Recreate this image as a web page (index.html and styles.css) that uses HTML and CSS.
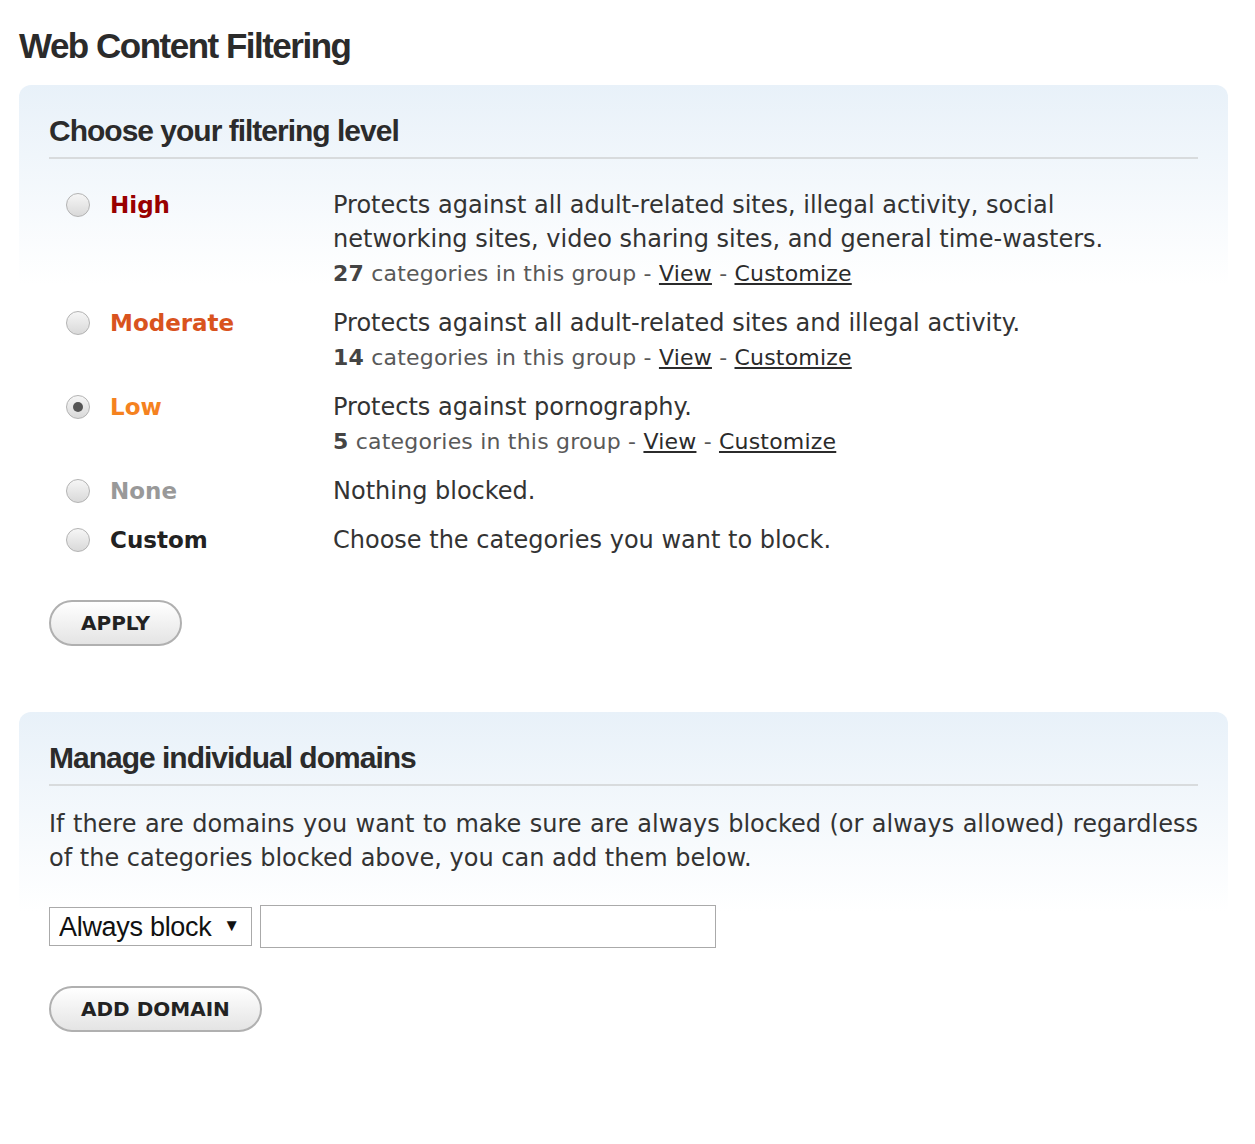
FILE: index.html
```html
<!DOCTYPE html>
<html lang="en">
<head>
    <meta charset="UTF-8">
    <meta name="viewport" content="width=device-width, initial-scale=1.0">
    <title>Web Content Filtering</title>
    <link rel="stylesheet" href="styles.css">
</head>
<body>
    <div class="page">
        <h1>Web Content Filtering</h1>

        <section class="panel">
            <h2>Choose your filtering level</h2>
            <form class="levels">
                <div class="level">
                    <label class="level-name high"><input type="radio" name="level"> High</label>
                    <div class="level-info">
                        <p class="desc">Protects against all adult-related sites, illegal activity, social networking sites, video sharing sites, and general time-wasters.</p>
                        <p class="count"><b>27</b> categories in this group - <a href="#">View</a> - <a href="#">Customize</a></p>
                    </div>
                </div>
                <div class="level">
                    <label class="level-name moderate"><input type="radio" name="level"> Moderate</label>
                    <div class="level-info">
                        <p class="desc">Protects against all adult-related sites and illegal activity.</p>
                        <p class="count"><b>14</b> categories in this group - <a href="#">View</a> - <a href="#">Customize</a></p>
                    </div>
                </div>
                <div class="level">
                    <label class="level-name low"><input type="radio" name="level" checked> Low</label>
                    <div class="level-info">
                        <p class="desc">Protects against pornography.</p>
                        <p class="count"><b>5</b> categories in this group - <a href="#">View</a> - <a href="#">Customize</a></p>
                    </div>
                </div>
                <div class="level">
                    <label class="level-name none"><input type="radio" name="level"> None</label>
                    <div class="level-info">
                        <p class="desc">Nothing blocked.</p>
                    </div>
                </div>
                <div class="level">
                    <label class="level-name custom"><input type="radio" name="level"> Custom</label>
                    <div class="level-info">
                        <p class="desc">Choose the categories you want to block.</p>
                    </div>
                </div>
                <button type="button" class="pill apply">APPLY</button>
            </form>
        </section>

        <section class="panel">
            <h2>Manage individual domains</h2>
            <p class="intro">If there are domains you want to make sure are always blocked (or always allowed) regardless of the categories blocked above, you can add them below.</p>
            <div class="domain-row">
                <span class="select-wrap">
                    <select class="domain-mode">
                        <option>Always block</option>
                        <option>Always allow</option>
                    </select>
                </span>
                <input type="text" class="domain-input">
            </div>
            <button type="button" class="pill add">ADD DOMAIN</button>
        </section>
    </div>
</body>
</html>
```

FILE: styles.css
```css
body {
    margin: 0;
    background-color: #ffffff;
    color: #333333;
    font-family: "DejaVu Sans", Verdana, sans-serif;
}
.page {
    padding: 0 27px 40px 19px;
}
h1 {
    margin: 26px 0 19px;
    font-family: "Liberation Sans", Arial, sans-serif;
    font-size: 35px;
    line-height: 40px;
    letter-spacing: -1.5px;
    color: #2b2b2b;
}
.panel {
    background: linear-gradient(to bottom, #e8f1f9 0, #ffffff 200px);
    border-radius: 12px;
    padding: 28px 30px 30px;
    margin-bottom: 36px;
}
h2 {
    margin: 0;
    padding-bottom: 8px;
    border-bottom: 2px solid #d8dbdd;
    font-family: "Liberation Sans", Arial, sans-serif;
    font-size: 30px;
    line-height: 36px;
    letter-spacing: -1px;
    color: #2b2b2b;
}
.levels {
    margin-top: 29px;
}
.level {
    display: grid;
    grid-template-columns: 267px 1fr;
    padding-left: 17px;
    margin-bottom: 15px;
}
.level-name {
    display: flex;
    align-items: center;
    gap: 20px;
    height: 34px;
    font-size: 23px;
    font-weight: bold;
}
.level-name.high { color: #990000; }
.level-name.moderate { color: #d9531e; }
.level-name.low { color: #f5821f; }
.level-name.none { color: #999999; }
.level-name.custom { color: #222222; }

input[type="radio"] {
    appearance: none;
    margin: 0;
    width: 24px;
    height: 24px;
    border: 1px solid #b3b3b3;
    border-radius: 50%;
    background: linear-gradient(to bottom, #f6f6f6, #d9d9d9);
    display: grid;
    place-items: center;
}
input[type="radio"]:checked::after {
    content: "";
    width: 10px;
    height: 10px;
    border-radius: 50%;
    background: #555555;
}
.level-info p {
    margin: 0;
}
.desc {
    font-size: 24px;
    line-height: 34px;
    max-width: 800px;
}
.count {
    font-size: 22px;
    line-height: 35px;
    letter-spacing: 0.2px;
    color: #595959;
}
.count b {
    color: #444444;
}
.count a {
    color: #2b2b2b;
}
.pill {
    display: block;
    height: 46px;
    padding: 0 30px;
    border: 2px solid #b0b0b0;
    border-radius: 23px;
    background: linear-gradient(to bottom, #ffffff, #e4e4e4);
    font-family: "DejaVu Sans", Verdana, sans-serif;
    font-size: 20px;
    font-weight: bold;
    color: #222222;
    cursor: pointer;
}
.apply {
    margin-top: 43px;
}
.intro {
    margin: 21px 0 30px;
    font-size: 24px;
    line-height: 34px;
    text-align: justify;
}
.domain-row {
    display: flex;
    align-items: center;
    gap: 8px;
}
.select-wrap {
    position: relative;
}
.select-wrap::after {
    content: "\25BC";
    position: absolute;
    right: 12px;
    top: 9px;
    font-family: "Liberation Sans", Arial, sans-serif;
    font-size: 17px;
    color: #111111;
    pointer-events: none;
}
.domain-mode {
    appearance: none;
    width: 203px;
    height: 39px;
    padding: 0 0 0 9px;
    border: 1px solid #aaaaaa;
    border-radius: 0;
    background: #ffffff;
    font-family: "Liberation Sans", Arial, sans-serif;
    font-size: 27px;
    letter-spacing: -0.3px;
    color: #111111;
}
.domain-input {
    width: 456px;
    height: 43px;
    box-sizing: border-box;
    border: 1px solid #aaaaaa;
    font-size: 22px;
}
.add {
    margin-top: 38px;
}
```
